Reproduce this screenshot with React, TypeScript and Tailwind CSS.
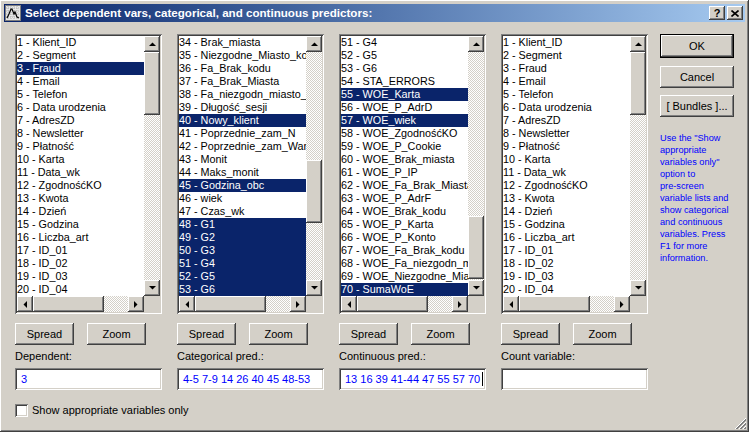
import React from "react";

const raised =
  "shadow-[inset_-1px_-1px_#404040,inset_1px_1px_#ffffff,inset_-2px_-2px_#808080,inset_2px_2px_#d4d0c8]";
const sunken =
  "shadow-[inset_1px_1px_#808080,inset_-1px_-1px_#ffffff,inset_2px_2px_#404040,inset_-2px_-2px_#d4d0c8]";
const checker =
  "bg-[repeating-conic-gradient(#ffffff_0_25%,#d4d0c8_0_50%)] bg-[length:2px_2px]";

type Row = { t: string; sel?: boolean };

const basic: string[] = [
  "1 - Klient_ID",
  "2 - Segment",
  "3 - Fraud",
  "4 - Email",
  "5 - Telefon",
  "6 - Data urodzenia",
  "7 - AdresZD",
  "8 - Newsletter",
  "9 - Płatność",
  "10 - Karta",
  "11 - Data_wk",
  "12 - ZgodnośćKO",
  "13 - Kwota",
  "14 - Dzień",
  "15 - Godzina",
  "16 - Liczba_art",
  "17 - ID_01",
  "18 - ID_02",
  "19 - ID_03",
  "20 - ID_04",
];

const depRows: Row[] = basic.map((t, i) => ({ t, sel: i === 2 }));
const countRows: Row[] = basic.map((t) => ({ t }));

const catRows: Row[] = [
  { t: "34 - Brak_miasta" },
  { t: "35 - Niezgodne_Miasto_kod" },
  { t: "36 - Fa_Brak_kodu" },
  { t: "37 - Fa_Brak_Miasta" },
  { t: "38 - Fa_niezgodn_miasto_kod" },
  { t: "39 - Długość_sesji" },
  { t: "40 - Nowy_klient", sel: true },
  { t: "41 - Poprzednie_zam_N" },
  { t: "42 - Poprzednie_zam_Wartosc" },
  { t: "43 - Monit" },
  { t: "44 - Maks_monit" },
  { t: "45 - Godzina_obc", sel: true },
  { t: "46 - wiek" },
  { t: "47 - Czas_wk" },
  { t: "48 - G1", sel: true },
  { t: "49 - G2", sel: true },
  { t: "50 - G3", sel: true },
  { t: "51 - G4", sel: true },
  { t: "52 - G5", sel: true },
  { t: "53 - G6", sel: true },
];

const contRows: Row[] = [
  { t: "51 - G4" },
  { t: "52 - G5" },
  { t: "53 - G6" },
  { t: "54 - STA_ERRORS" },
  { t: "55 - WOE_Karta", sel: true },
  { t: "56 - WOE_P_AdrD" },
  { t: "57 - WOE_wiek", sel: true },
  { t: "58 - WOE_ZgodnośćKO" },
  { t: "59 - WOE_P_Cookie" },
  { t: "60 - WOE_Brak_miasta" },
  { t: "61 - WOE_P_IP" },
  { t: "62 - WOE_Fa_Brak_Miasta" },
  { t: "63 - WOE_P_AdrF" },
  { t: "64 - WOE_Brak_kodu" },
  { t: "65 - WOE_P_Karta" },
  { t: "66 - WOE_P_Konto" },
  { t: "67 - WOE_Fa_Brak_kodu" },
  { t: "68 - WOE_Fa_niezgodn_miasto" },
  { t: "69 - WOE_Niezgodne_Miasto_kod" },
  { t: "70 - SumaWoE", sel: true },
];

function Arrow({ dir }: { dir: "up" | "down" | "left" | "right" }) {
  const pts = {
    up: "0,4 7,4 3.5,0.5",
    down: "0,0 7,0 3.5,3.5",
    left: "4,0 4,7 0.5,3.5",
    right: "0,0 0,7 3.5,3.5",
  }[dir];
  const vertical = dir === "up" || dir === "down";
  return (
    <svg
      width={vertical ? 7 : 4}
      height={vertical ? 4 : 7}
      viewBox={vertical ? "0 0 7 4" : "0 0 4 7"}
    >
      <polygon points={pts} fill="#000" />
    </svg>
  );
}

function ScrollBtn({ dir }: { dir: "up" | "down" | "left" | "right" }) {
  return (
    <div
      className={`w-[16px] h-[16px] shrink-0 bg-[#d4d0c8] ${raised} flex items-center justify-center`}
    >
      <Arrow dir={dir} />
    </div>
  );
}

function ListBox({ rows, thumbTop }: { rows: Row[]; thumbTop: string }) {
  return (
    <div className={`w-[147px] h-[280px] bg-white ${sunken} p-[2px] flex flex-col`}>
      <div className="flex h-[260px]">
        <div className="w-[127px] overflow-hidden text-[10.8px]">
          {rows.map((r) => (
            <div
              key={r.t}
              className={`h-[13px] leading-[13px] whitespace-nowrap ${
                r.sel ? "bg-[#0a246a] text-white" : "text-black"
              }`}
            >
              {r.t}
            </div>
          ))}
        </div>
        <div className="w-[16px] flex flex-col">
          <ScrollBtn dir="up" />
          <div className={`${thumbTop} ${checker}`} />
          <div className={`h-[63px] shrink-0 bg-[#d4d0c8] ${raised}`} />
          <div className={`flex-1 ${checker}`} />
          <ScrollBtn dir="down" />
        </div>
      </div>
      <div className="flex h-[16px]">
        <ScrollBtn dir="left" />
        <div className={`w-[71px] h-[16px] bg-[#d4d0c8] ${raised}`} />
        <div className={`flex-1 ${checker}`} />
        <ScrollBtn dir="right" />
        <div className="w-[16px] h-[16px] bg-[#d4d0c8]" />
      </div>
    </div>
  );
}

function Btn({ label, w }: { label: string; w: string }) {
  return (
    <div
      className={`${w} h-[22px] bg-[#d4d0c8] ${raised} flex items-center justify-center text-black`}
    >
      {label}
    </div>
  );
}

function Column({
  rows,
  thumbTop,
  label,
  value,
  caret,
}: {
  rows: Row[];
  thumbTop: string;
  label: string;
  value: string;
  caret?: boolean;
}) {
  return (
    <div className="flex flex-col w-[147px]">
      <ListBox rows={rows} thumbTop={thumbTop} />
      <div className="flex gap-[13px] mt-[9px]">
        <Btn label="Spread" w="w-[59px]" />
        <Btn label="Zoom" w="w-[59px]" />
      </div>
      <div className="h-[23px] pt-[5px] leading-[13px] text-black">{label}</div>
      <div
        className={`h-[22px] bg-white ${sunken} pl-[6px] flex items-center text-[#0000ff] whitespace-nowrap overflow-hidden`}
      >
        {value}
        {caret && <span className="ml-[2px] w-[1px] h-[14px] bg-black" />}
      </div>
    </div>
  );
}

function AppIcon() {
  return (
    <svg width="16" height="16" viewBox="0 0 16 16">
      <rect x="0.5" y="0.5" width="15" height="15" fill="#e8e8e8" stroke="#808080" />
      {[3, 6, 9, 12].map((v) => (
        <g key={v}>
          <line x1={v} y1="1" x2={v} y2="15" stroke="#b0b0b0" strokeDasharray="1 1" />
          <line x1="1" y1={v} x2="15" y2={v} stroke="#b0b0b0" strokeDasharray="1 1" />
        </g>
      ))}
      <polyline
        points="2,13 4,9 6,4 7,4 9,9 10,7 12,12 14,13"
        fill="none"
        stroke="#000"
        strokeWidth="1.2"
      />
    </svg>
  );
}

export default function App() {
  return (
    <div
      className={`relative w-[749px] h-[432px] bg-[#d4d0c8] ${raised} p-[4px] font-['Liberation_Sans',Arial,sans-serif] text-[11px] overflow-hidden`}
    >
      {/* title bar */}
      <div className="h-[18px] flex items-center bg-gradient-to-r from-[#0a246a] to-[#a6caf0] pl-[1px] pr-[2px]">
        <AppIcon />
        <div className="ml-[4px] text-white font-bold text-[11.6px] whitespace-nowrap">
          Select dependent vars, categorical, and continuous predictors:
        </div>
        <div className="ml-auto flex gap-[2px]">
          <div
            className={`w-[16px] h-[14px] bg-[#d4d0c8] ${raised} flex items-center justify-center font-bold text-[11px] text-black leading-none`}
          >
            ?
          </div>
          <div
            className={`w-[16px] h-[14px] bg-[#d4d0c8] ${raised} flex items-center justify-center`}
          >
            <svg width="8" height="7" viewBox="0 0 8 7">
              <path d="M0.5 0.5 L7.5 6.5 M7.5 0.5 L0.5 6.5" stroke="#000" strokeWidth="1.6" />
            </svg>
          </div>
        </div>
      </div>

      <div className="flex pt-[12px] pl-[11px]">
        <div className="flex flex-col">
          <div className="flex gap-[15px]">
            <Column rows={depRows} thumbTop="h-[0px]" label="Dependent:" value="3" />
            <Column
              rows={catRows}
              thumbTop="h-[108px]"
              label="Categorical pred.:"
              value="4-5 7-9 14 26 40 45 48-53"
            />
            <Column
              rows={contRows}
              thumbTop="h-[164px]"
              label="Continuous pred.:"
              value="13 16 39 41-44 47 55 57 70"
              caret
            />
            <Column rows={countRows} thumbTop="h-[0px]" label="Count variable:" value="" />
          </div>
          <div className="flex items-center mt-[12px]">
            <div className={`w-[13px] h-[13px] bg-white ${sunken}`} />
            <div className="ml-[4px] text-black">Show appropriate variables only</div>
          </div>
        </div>

        <div className="ml-[12px] w-[74px] flex flex-col">
          <div className="border border-black">
            <Btn label="OK" w="w-[72px]" />
          </div>
          <div className="mt-[8px]">
            <Btn label="Cancel" w="w-[74px]" />
          </div>
          <div className="mt-[7px]">
            <Btn label="[ Bundles ]..." w="w-[74px]" />
          </div>
          <div className="mt-[15px] text-[9.2px] leading-[12px] text-[#0000ff] whitespace-nowrap">
            Use the "Show
            <br />
            appropriate
            <br />
            variables only"
            <br />
            option to
            <br />
            pre-screen
            <br />
            variable lists and
            <br />
            show categorical
            <br />
            and continuous
            <br />
            variables. Press
            <br />
            F1 for more
            <br />
            information.
          </div>
        </div>
      </div>

      {/* resize grip */}
      <svg className="absolute right-[3px] bottom-[3px]" width="12" height="12" viewBox="0 0 12 12">
        {[0, 4, 8].map((o) => (
          <g key={o}>
            <line x1={12} y1={1 + o} x2={1 + o} y2={12} stroke="#ffffff" />
            <line x1={12} y1={2 + o} x2={2 + o} y2={12} stroke="#808080" />
            <line x1={12} y1={3 + o} x2={3 + o} y2={12} stroke="#808080" />
          </g>
        ))}
      </svg>
    </div>
  );
}
